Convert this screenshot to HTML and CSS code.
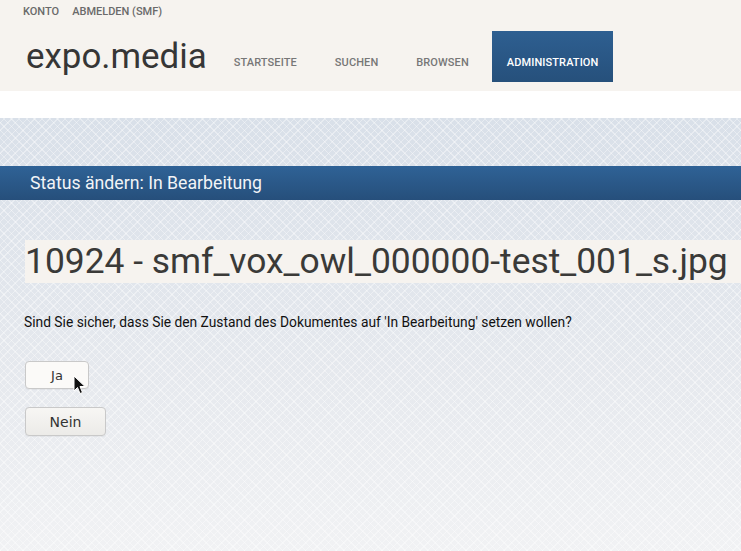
FILE: index.html
```html
<!DOCTYPE html>
<html lang="de">
<head>
<meta charset="utf-8">
<title>expo.media</title>
<link rel="stylesheet" href="styles.css">
</head>
<body>
<header class="site-header">
  <div class="topbar">
    <a class="toplink" href="#">Konto</a>
    <a class="toplink" href="#">Abmelden (SMF)</a>
  </div>
  <div class="mainbar">
    <div class="logo">expo.media</div>
    <nav class="nav">
      <a class="nav-item" href="#">Startseite</a>
      <a class="nav-item" href="#">Suchen</a>
      <a class="nav-item" href="#">Browsen</a>
      <a class="nav-item active" href="#">Administration</a>
    </nav>
  </div>
</header>
<div class="spacer"></div>
<main class="content">
  <div class="section-bar">Status ändern: In Bearbeitung</div>
  <h1 class="doc-title">10924 - smf_vox_owl_000000-test_001_s.jpg</h1>
  <p class="question">Sind Sie sicher, dass Sie den Zustand des Dokumentes auf 'In Bearbeitung' setzen wollen?</p>
  <div class="actions">
    <div class="btn-wrap">
      <button class="btn btn-ja">Ja</button>
      <svg class="cursor" width="13" height="20" viewBox="0 0 13 20"><path d="M1 1 L1 16 L4.5 12.5 L7 18.5 L9.5 17.5 L7 11.5 L12 11.5 Z" fill="#111" stroke="#fff" stroke-width="1" stroke-linejoin="round"/></svg>
    </div>
    <div class="btn-wrap">
      <button class="btn btn-nein">Nein</button>
    </div>
  </div>
</main>
</body>
</html>
```
FILE: styles.css
```css
html, body {
  margin: 0;
  padding: 0;
  height: 100%;
}
body {
  font-family: Roboto, "Liberation Sans", sans-serif;
  background: #fff;
  overflow: hidden;
}
a { text-decoration: none; }

.site-header {
  background: #f6f3ef;
}
.topbar {
  height: 22px;
  display: flex;
  align-items: center;
  gap: 13px;
  padding-left: 23px;
}
.toplink {
  font-size: 11px;
  font-weight: 500;
  color: #6a6a6a;
  text-transform: uppercase;
}
.mainbar {
  height: 69px;
  display: flex;
  align-items: center;
  padding-left: 26px;
}
.logo {
  font-size: 34.9px;
  color: #363636;
  line-height: 40px;
}
.nav {
  display: flex;
  gap: 8px;
  margin-left: 12px;
  align-self: flex-start;
  margin-top: 9px;
}
.nav-item {
  display: block;
  height: 51px;
  box-sizing: border-box;
  padding: 25px 15px 0;
  line-height: 13px;
  font-size: 11px;
  font-weight: 500;
  color: #777;
  text-transform: uppercase;
  letter-spacing: 0.1px;
}
.nav-item.active {
  background: linear-gradient(#2e5f91, #26507b);
  color: #fff;
}

.spacer {
  height: 27px;
  background: #fff;
}

.content {
  min-height: calc(100% - 118px);
  padding-top: 48px;
  box-sizing: border-box;
  background:
    repeating-linear-gradient(45deg, rgba(255,255,255,0.38) 0 1px, transparent 1px 5.4px),
    repeating-linear-gradient(-45deg, rgba(255,255,255,0.38) 0 1px, transparent 1px 5.4px),
    linear-gradient(#d9e0e9, #e6e9ee 60%, #f1f2f4);
}
.section-bar {
  height: 34px;
  line-height: 34px;
  padding-left: 30px;
  font-size: 17.7px;
  color: #f2f4f7;
  background: linear-gradient(#2f6296, #264f7b);
}
.doc-title {
  margin: 40px 0 0 25px;
  height: 43px;
  line-height: 43px;
  background: #f6f3ef;
  font-size: 35.4px;
  font-weight: 400;
  color: #3a3a38;
  white-space: nowrap;
  padding-left: 0;
}
.question {
  margin: 30px 0 0 24px;
  font-size: 13.8px;
  color: #111;
  line-height: 18px;
}
.actions {
  margin: 30px 0 0 25px;
  display: flex;
  flex-direction: column;
  align-items: flex-start;
  gap: 18px;
}
.btn-wrap {
  position: relative;
}
.btn {
  font-family: "DejaVu Sans", sans-serif;
  font-size: 14px;
  color: #333;
  height: 28px;
  padding: 0;
  border: 1px solid #c9c9c9;
  border-radius: 4px;
  box-shadow: 0 1px 0 rgba(0,0,0,0.04);
}
.btn-ja {
  width: 64px;
  font-size: 13px;
  background: #fbfaf8;
}
.btn-nein {
  width: 81px;
  height: 29px;
  background: linear-gradient(#f7f6f4, #ecebe8);
}
.cursor {
  position: absolute;
  left: 48px;
  top: 14px;
}
```
